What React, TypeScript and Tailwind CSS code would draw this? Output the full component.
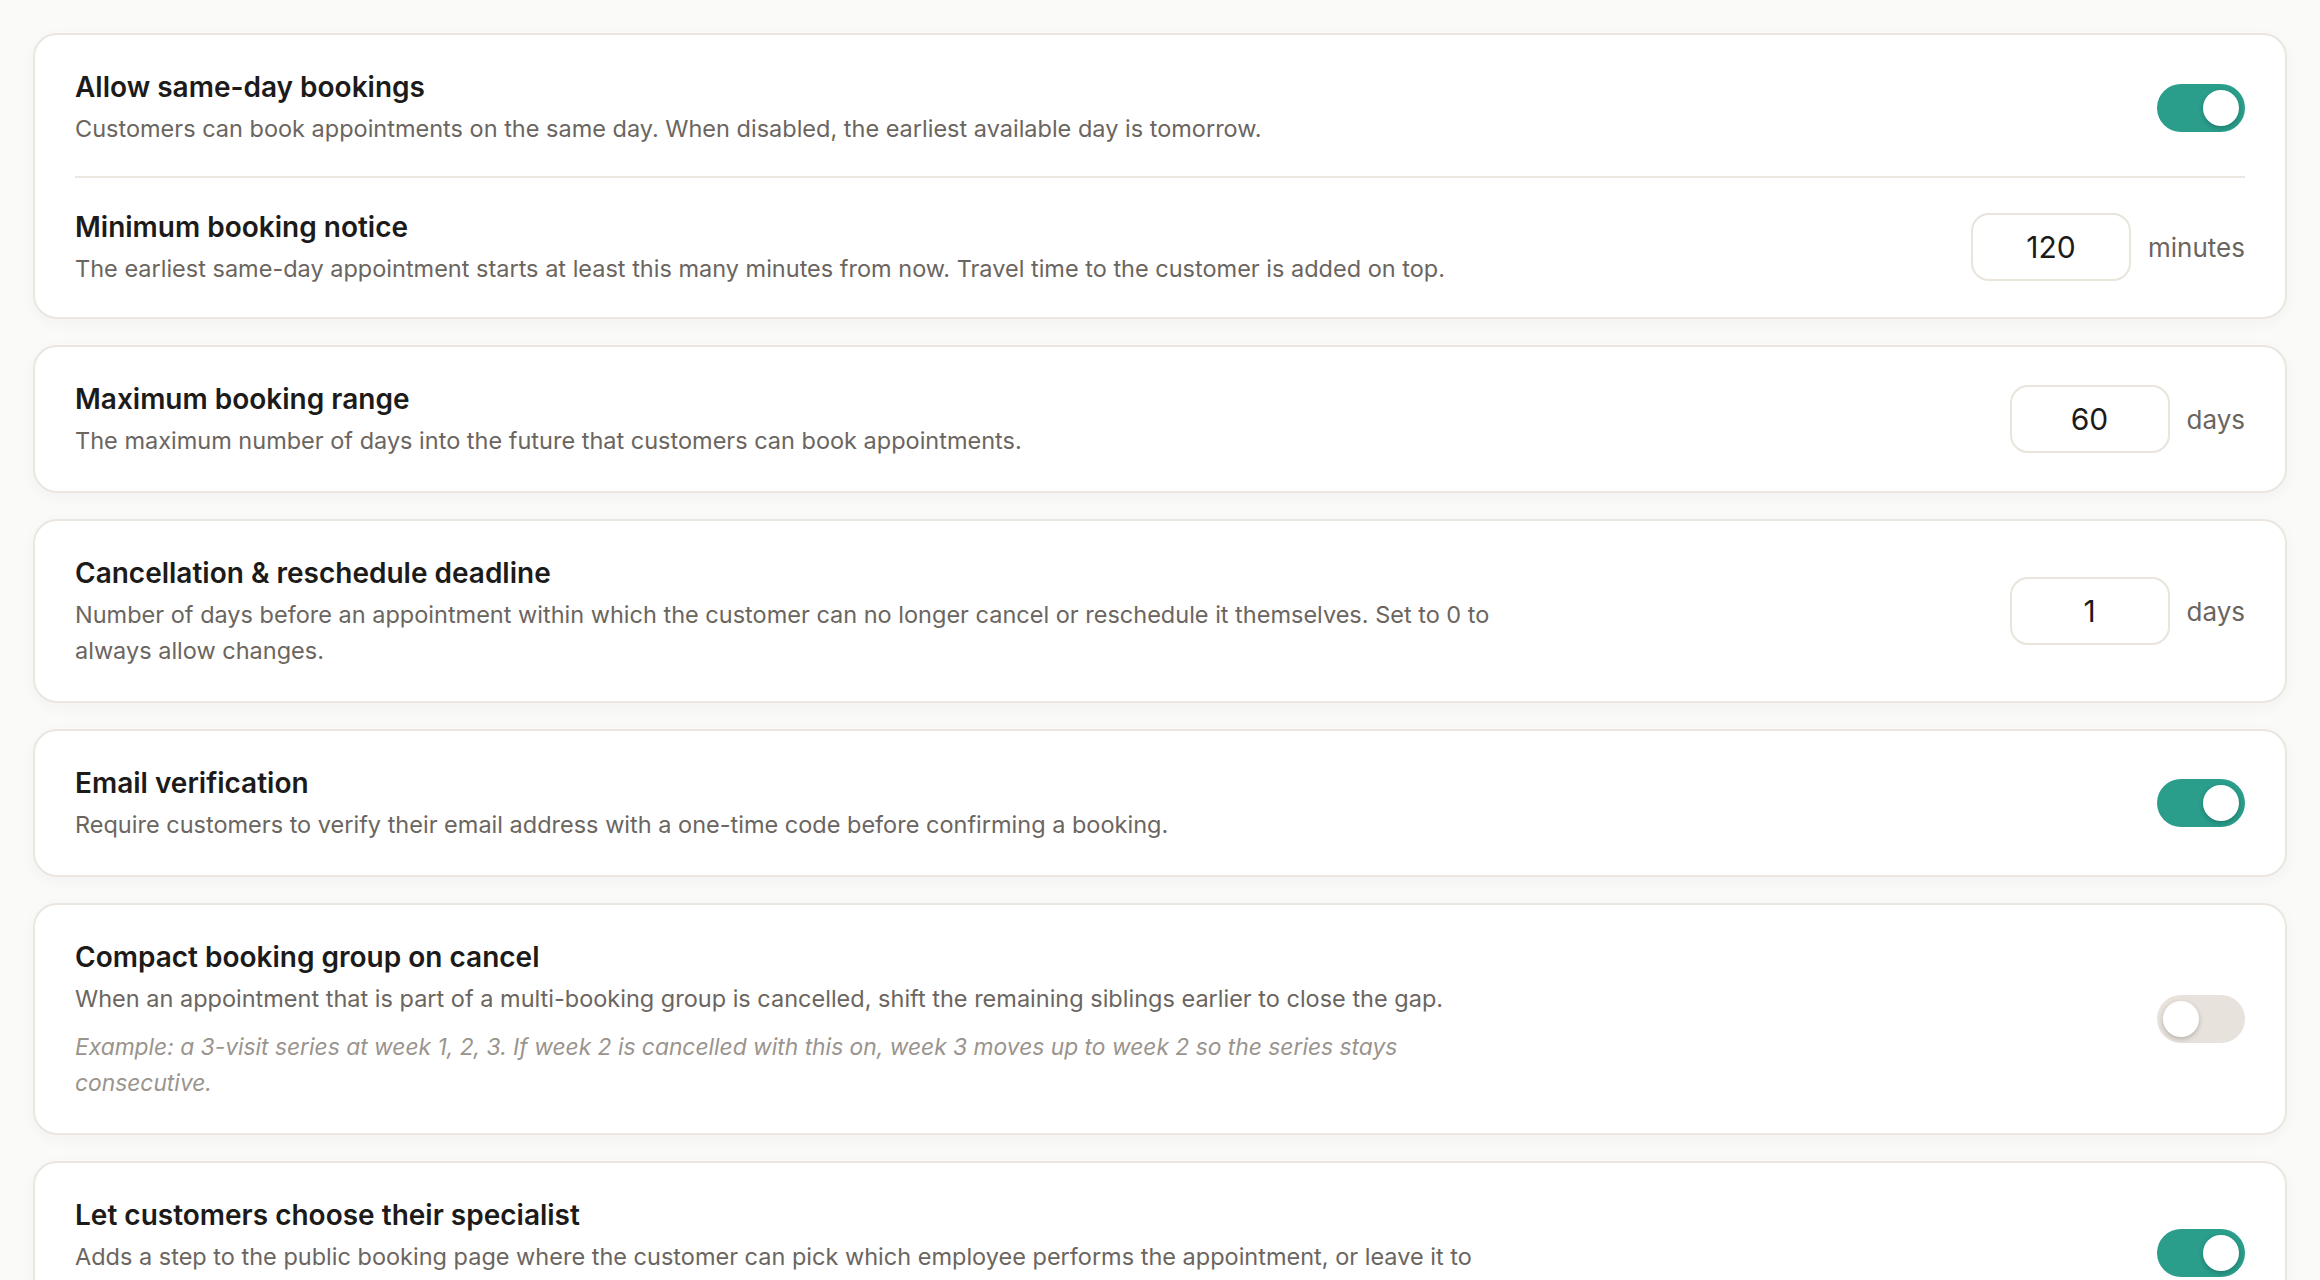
import { useState } from 'react';

type Setting =
  | { kind: 'toggle'; title: string; desc: string; note?: string; on: boolean }
  | { kind: 'number'; title: string; desc: string; value: number; unit: string };

function Toggle({ on, onChange, className = '' }: { on: boolean; onChange: (v: boolean) => void; className?: string }) {
  return (
    <button
      type="button"
      onClick={() => onChange(!on)}
      className={`flex h-[48px] w-[88px] shrink-0 items-center rounded-full px-[6px] transition-colors ${
        on ? 'justify-end bg-[#2a9d8b]' : 'justify-start bg-[#e8e2dc]'
      } ${className}`}
    >
      <span className="h-[36px] w-[36px] rounded-full bg-white shadow-[0_2px_5px_rgba(0,0,0,0.22)]" />
    </button>
  );
}

function NumberField({ value, unit }: { value: number; unit: string }) {
  const [val, setVal] = useState(String(value));
  return (
    <div className="flex shrink-0 items-center gap-[17px]">
      <input
        value={val}
        onChange={(e) => setVal(e.target.value)}
        className="h-[68px] w-[160px] rounded-[18px] border-2 border-[#e9e4dc] bg-white text-center text-[30px] text-[#1c1b1a] outline-none"
      />
      <span className="text-[26px] text-[#6b6560]">{unit}</span>
    </div>
  );
}

function Row({ s, toggleClass }: { s: Setting; toggleClass?: string }) {
  const [on, setOn] = useState(s.kind === 'toggle' ? s.on : false);
  return (
    <div className="flex items-center justify-between gap-[40px]">
      <div className="max-w-[1420px]">
        <h3 className="text-[28px] font-semibold leading-[40px] text-[#1c1b1a]">{s.title}</h3>
        <p className="mt-[4px] text-[23.5px] leading-[36px] text-[#6b6560]">{s.desc}</p>
        {s.kind === 'toggle' && s.note && (
          <p className="mt-[12px] text-[22.8px] italic leading-[36px] text-[#9a948e]">{s.note}</p>
        )}
      </div>
      {s.kind === 'toggle' ? (
        <Toggle on={on} onChange={setOn} className={toggleClass} />
      ) : (
        <NumberField value={s.value} unit={s.unit} />
      )}
    </div>
  );
}

function Card({ children, className = 'py-[32px]' }: { children: React.ReactNode; className?: string }) {
  return (
    <section
      className={`rounded-[24px] border-2 border-[#ebe6df] bg-white px-[40px] shadow-[0_4px_14px_rgba(60,40,20,0.04)] ${className}`}
    >
      {children}
    </section>
  );
}

export default function App() {
  return (
    <div
      className="flex min-h-screen flex-col gap-[26px] bg-[#fafaf9] px-[33px] pt-[33px] pb-[40px]"
      style={{ fontFamily: 'Inter, "Noto Sans", sans-serif' }}
    >
      {/* same-day rules share one card, split by a divider */}
      <Card className="pt-[32px] pb-[30px]">
        <div className="pb-[29px]">
          <Row
            toggleClass="mt-[2px]"
            s={{
              kind: 'toggle',
              title: 'Allow same-day bookings',
              desc: 'Customers can book appointments on the same day. When disabled, the earliest available day is tomorrow.',
              on: true,
            }}
          />
        </div>
        <div className="border-t-2 border-[#ebe6df] pt-[29px]">
          <Row
            s={{
              kind: 'number',
              title: 'Minimum booking notice',
              desc: 'The earliest same-day appointment starts at least this many minutes from now. Travel time to the customer is added on top.',
              value: 120,
              unit: 'minutes',
            }}
          />
        </div>
      </Card>

      <Card>
        <Row
          s={{
            kind: 'number',
            title: 'Maximum booking range',
            desc: 'The maximum number of days into the future that customers can book appointments.',
            value: 60,
            unit: 'days',
          }}
        />
      </Card>

      <Card>
        <Row
          s={{
            kind: 'number',
            title: 'Cancellation & reschedule deadline',
            desc: 'Number of days before an appointment within which the customer can no longer cancel or reschedule it themselves. Set to 0 to always allow changes.',
            value: 1,
            unit: 'days',
          }}
        />
      </Card>

      <Card>
        <Row
          s={{
            kind: 'toggle',
            title: 'Email verification',
            desc: 'Require customers to verify their email address with a one-time code before confirming a booking.',
            on: true,
          }}
        />
      </Card>

      <Card>
        <Row
          s={{
            kind: 'toggle',
            title: 'Compact booking group on cancel',
            desc: 'When an appointment that is part of a multi-booking group is cancelled, shift the remaining siblings earlier to close the gap.',
            note: 'Example: a 3-visit series at week 1, 2, 3. If week 2 is cancelled with this on, week 3 moves up to week 2 so the series stays consecutive.',
            on: false,
          }}
        />
      </Card>

      <Card>
        <Row
          s={{
            kind: 'toggle',
            title: 'Let customers choose their specialist',
            desc: 'Adds a step to the public booking page where the customer can pick which employee performs the appointment, or leave it to the system to assign the first available specialist.',
            on: true,
          }}
        />
      </Card>
    </div>
  );
}
